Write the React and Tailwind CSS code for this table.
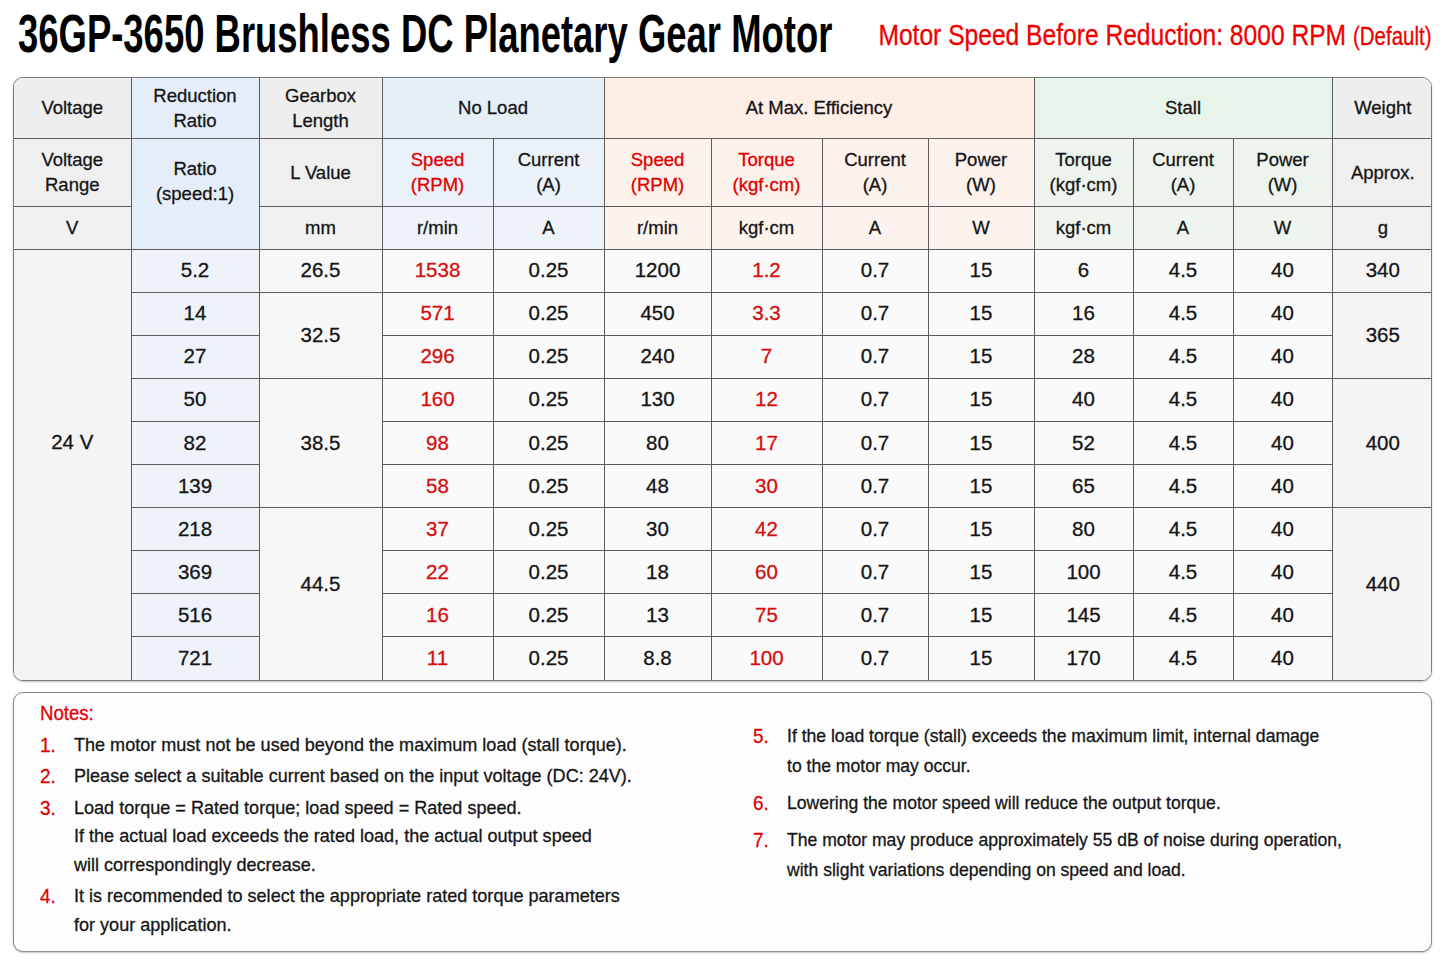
import React from "react";

const FONT = { fontFamily: '"Liberation Sans", Arial, sans-serif' };

const rows = [
  { r: "5.2", l: ["26.5", 1], s: "1538", c: "0.25", es: "1200", et: "1.2", st: "6", w: ["340", 1] },
  { r: "14", l: ["32.5", 2], s: "571", c: "0.25", es: "450", et: "3.3", st: "16", w: ["365", 2] },
  { r: "27", s: "296", c: "0.25", es: "240", et: "7", st: "28" },
  { r: "50", l: ["38.5", 3], s: "160", c: "0.25", es: "130", et: "12", st: "40", w: ["400", 3] },
  { r: "82", s: "98", c: "0.25", es: "80", et: "17", st: "52" },
  { r: "139", s: "58", c: "0.25", es: "48", et: "30", st: "65" },
  { r: "218", l: ["44.5", 4], s: "37", c: "0.25", es: "30", et: "42", st: "80", w: ["440", 4] },
  { r: "369", s: "22", c: "0.25", es: "18", et: "60", st: "100" },
  { r: "516", s: "16", c: "0.25", es: "13", et: "75", st: "145" },
  { r: "721", s: "11", c: "0.25", es: "8.8", et: "100", st: "170" },
];

const widths = [117, 128, 123, 111, 111, 107, 111, 106, 106, 99, 100, 99, 101];

const H = "border border-[#5c5c5c] text-center align-middle text-[18.5px] leading-[25px] text-[#151515] font-normal p-0 whitespace-nowrap";
const D = "border border-[#5c5c5c] text-center align-middle text-[20.5px] text-[#151515] h-[43.1px] p-0 whitespace-nowrap";

function Notes() {
  const left = [
    ["1.", ["The motor must not be used beyond the maximum load (stall torque)."]],
    ["2.", ["Please select a suitable current based on the input voltage (DC: 24V)."]],
    ["3.", ["Load torque = Rated torque; load speed = Rated speed.", "If the actual load exceeds the rated load, the actual output speed", "will correspondingly decrease."]],
    ["4.", ["It is recommended to select the appropriate rated torque parameters", "for your application."]],
  ];
  const right = [
    ["5.", ["If the load torque (stall) exceeds the maximum limit, internal damage", "to the motor may occur."]],
    ["6.", ["Lowering the motor speed will reduce the output torque."]],
    ["7.", ["The motor may produce approximately 55 dB of noise during operation,", "with slight variations depending on speed and load."]],
  ];
  return (
    <div className="mx-[13px] mt-[11px] h-[260px] rounded-[10px] border border-[#8a8a8a] bg-[#fdfdfd] shadow-[0_1px_2px_rgba(0,0,0,0.25)] flex [-webkit-text-stroke:0.3px]">
      <div className="w-[714px] pl-[26px] pt-[7px]">
        <div className="text-[#e00000] text-[20px] leading-[26px]">
          <span className="inline-block scale-x-[0.93] origin-left">Notes:</span>
        </div>
        <div className="mt-[5px] flex flex-col gap-[3px]">
          {left.map(([n, lines]) => (
            <div key={n} className="flex">
              <div className="w-[34px] text-[#e00000] text-[21px] leading-[28.5px]">
                <span className="inline-block scale-x-[0.9] origin-left">{n}</span>
              </div>
              <div className="text-[19px] leading-[28.5px] text-[#151515]">
                {lines.map((t, i) => (
                  <div key={i} className="whitespace-nowrap">
                    <span className="inline-block scale-x-[0.95] origin-left">{t}</span>
                  </div>
                ))}
              </div>
            </div>
          ))}
        </div>
      </div>
      <div className="flex-1 pl-[25px] pt-[28px]">
        <div className="flex flex-col gap-[7px]">
          {right.map(([n, lines]) => (
            <div key={n} className="flex">
              <div className="w-[34px] text-[#e00000] text-[21px] leading-[30px]">
                <span className="inline-block scale-x-[0.9] origin-left">{n}</span>
              </div>
              <div className="text-[18.5px] leading-[30px] text-[#151515]">
                {lines.map((t, i) => (
                  <div key={i} className="whitespace-nowrap">
                    <span className="inline-block scale-x-[0.95] origin-left">{t}</span>
                  </div>
                ))}
              </div>
            </div>
          ))}
        </div>
      </div>
    </div>
  );
}

export default function App() {
  return (
    <div className="w-[1445px] h-[963px] bg-white overflow-hidden" style={FONT}>
      <div className="h-[77px] flex items-start">
        <div className="w-[850px] shrink-0 pl-[18px] pt-[3px] text-[54px] leading-[60px] font-bold text-black whitespace-nowrap">
          <span className="inline-block scale-x-[0.675] origin-left">36GP-3650 Brushless DC Planetary Gear Motor</span>
        </div>
        <div className="flex-1 min-w-0 flex justify-end pr-[13px] pt-[17px] text-[#ee0000] text-[30px] leading-[36px] whitespace-nowrap [-webkit-text-stroke:0.3px]">
          <span className="shrink-0 inline-block scale-x-[0.82] origin-right">
            Motor Speed Before Reduction: 8000 RPM <span className="text-[25px]">(Default)</span>
          </span>
        </div>
      </div>
      <div className="mx-[13px] rounded-[10px] border border-[#7a7a7a] overflow-hidden shadow-[0_1px_2px_rgba(0,0,0,0.25)] [-webkit-text-stroke:0.3px]">
        <table className="border-collapse border-hidden w-full table-fixed">
          <colgroup>
            {widths.map((w, i) => <col key={i} style={{ width: w }} />)}
          </colgroup>
          <thead>
            <tr className="h-[60px]">
              <th className={`${H} bg-[#eeeeee]`}>Voltage</th>
              <th className={`${H} bg-[#e4edf8]`}>Reduction<br />Ratio</th>
              <th className={`${H} bg-[#eeeeee]`}>Gearbox<br />Length</th>
              <th colSpan={2} className={`${H} bg-[#e6eef8]`}>No Load</th>
              <th colSpan={4} className={`${H} bg-[#fdeee6]`}>At Max. Efficiency</th>
              <th colSpan={3} className={`${H} bg-[#e8f3ea]`}>Stall</th>
              <th className={`${H} bg-[#eeeeee]`}>Weight</th>
            </tr>
            <tr className="h-[68px]">
              <th className={`${H} bg-[#efefef]`}>Voltage<br />Range</th>
              <th rowSpan={2} className={`${H} bg-[#e4edf8]`}>
                <div className="-mt-[26px]">Ratio<br />(speed:1)</div>
              </th>
              <th className={`${H} bg-[#efefef]`}>L Value</th>
              <th className={`${H} bg-[#ebf1f9] text-[#e00000]`}>Speed<br />(RPM)</th>
              <th className={`${H} bg-[#ebf1f9]`}>Current<br />(A)</th>
              <th className={`${H} bg-[#fdf1eb] text-[#e00000]`}>Speed<br />(RPM)</th>
              <th className={`${H} bg-[#fdf1eb] text-[#e00000]`}>Torque<br />(kgf·cm)</th>
              <th className={`${H} bg-[#fdf1eb]`}>Current<br />(A)</th>
              <th className={`${H} bg-[#fdf1eb]`}>Power<br />(W)</th>
              <th className={`${H} bg-[#ecf4ed]`}>Torque<br />(kgf·cm)</th>
              <th className={`${H} bg-[#ecf4ed]`}>Current<br />(A)</th>
              <th className={`${H} bg-[#ecf4ed]`}>Power<br />(W)</th>
              <th className={`${H} bg-[#efefef]`}>Approx.</th>
            </tr>
            <tr className="h-[43px]">
              <th className={`${H} bg-[#f1f1f1]`}>V</th>
              <th className={`${H} bg-[#f1f1f1]`}>mm</th>
              <th className={`${H} bg-[#eef3fa]`}>r/min</th>
              <th className={`${H} bg-[#eef3fa]`}>A</th>
              <th className={`${H} bg-[#fdf3ee]`}>r/min</th>
              <th className={`${H} bg-[#fdf3ee]`}>kgf·cm</th>
              <th className={`${H} bg-[#fdf3ee]`}>A</th>
              <th className={`${H} bg-[#fdf3ee]`}>W</th>
              <th className={`${H} bg-[#eef5ef]`}>kgf·cm</th>
              <th className={`${H} bg-[#eef5ef]`}>A</th>
              <th className={`${H} bg-[#eef5ef]`}>W</th>
              <th className={`${H} bg-[#f1f1f1]`}>g</th>
            </tr>
          </thead>
          <tbody className="bg-[#fafafa]">
            {rows.map((row, i) => (
              <tr key={i}>
                {i === 0 && (
                  <td rowSpan={10} className={`${D} bg-[#f4f4f4]`}>
                    <div className="pb-[44px]">24 V</div>
                  </td>
                )}
                <td className={`${D} bg-[#eef3fa] text-[#1b2f8f]`}>{row.r}</td>
                {row.l && (
                  <td rowSpan={row.l[1]} className={`${D} bg-[#f7f7f7]`}>
                    <div className={row.l[1] === 4 ? "pb-[20px]" : ""}>{row.l[0]}</div>
                  </td>
                )}
                <td className={`${D} text-[#d40f0f]`}>{row.s}</td>
                <td className={D}>{row.c}</td>
                <td className={D}>{row.es}</td>
                <td className={`${D} text-[#d40f0f]`}>{row.et}</td>
                <td className={D}>0.7</td>
                <td className={D}>15</td>
                <td className={D}>{row.st}</td>
                <td className={D}>4.5</td>
                <td className={D}>40</td>
                {row.w && (
                  <td rowSpan={row.w[1]} className={`${D} bg-[#f4f4f4]`}>
                    <div className={row.w[1] === 4 ? "pb-[20px]" : ""}>{row.w[0]}</div>
                  </td>
                )}
              </tr>
            ))}
          </tbody>
        </table>
      </div>
      <Notes />
    </div>
  );
}
